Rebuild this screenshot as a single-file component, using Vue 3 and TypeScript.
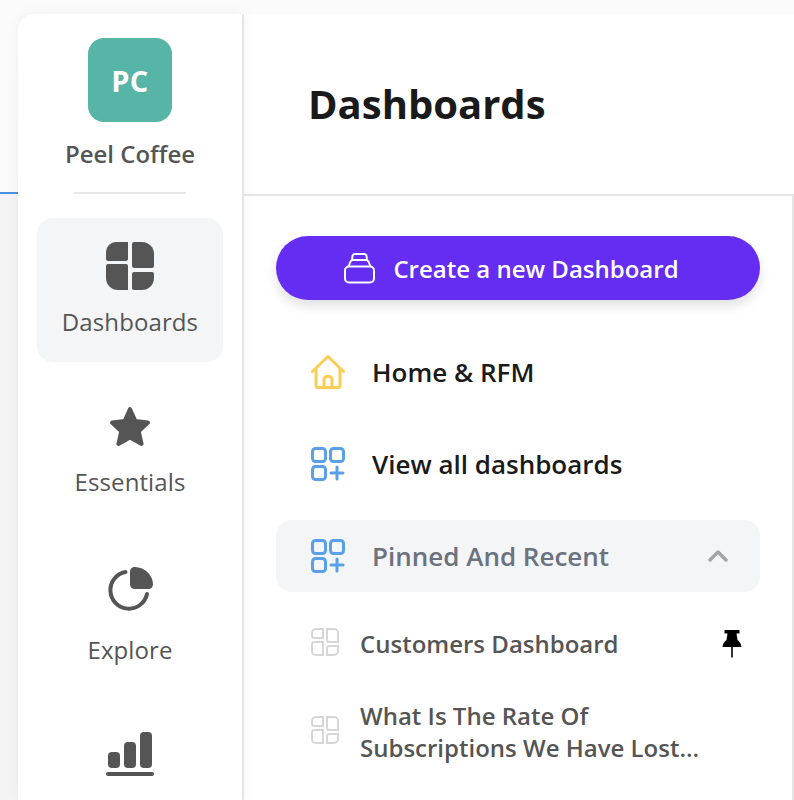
<template>
  <div class="page">
    <aside class="sidebar">
      <div class="brand">
        <div class="logo">PC</div>
        <div class="brand-name">Peel Coffee</div>
      </div>
      <div class="brand-divider"></div>
      <nav class="nav">
        <a class="nav-item active">
          <svg class="nav-icon" viewBox="0 0 48 48" fill="#555">
            <path d="M22 0V17a2 2 0 0 1-2 2H2a2 2 0 0 1-2-2V10A10 10 0 0 1 10 0Z" />
            <path d="M26 2a2 2 0 0 1 2-2h8A12 12 0 0 1 48 12V24a2 2 0 0 1-2 2H28a2 2 0 0 1-2-2Z" />
            <path d="M2 22H20a2 2 0 0 1 2 2V48H12A12 12 0 0 1 0 36V24a2 2 0 0 1 2-2Z" />
            <path d="M28 30H46a2 2 0 0 1 2 2V36A12 12 0 0 1 36 48H28a2 2 0 0 1-2-2V32a2 2 0 0 1 2-2Z" />
          </svg>
          <span class="nav-label">Dashboards</span>
        </a>
        <a class="nav-item essentials">
          <svg class="nav-icon" viewBox="0 0 48 48" fill="#555" stroke="#555" stroke-width="4" stroke-linejoin="round">
            <path d="M24 5 29.400 17.100 42 18.500 32.700 27.300 35.600 39.900 24 33.500 12.400 39.900 15.300 27.300 6 18.500 18.600 17.100Z" />
          </svg>
          <span class="nav-label">Essentials</span>
        </a>
        <a class="nav-item explore">
          <svg class="nav-icon" viewBox="0 0 48 48">
            <path d="M19.500 6A18.500 18.500 0 1 0 41 28" fill="none" stroke="#555" stroke-width="4" stroke-linecap="round" />
            <path d="M24 6C24 2.500 26 1 29 1 39 1 47 10 47 18 47 21 45 23 42 23H29C26 23 24 21 24 18Z" fill="#555" />
          </svg>
          <span class="nav-label">Explore</span>
        </a>
        <a class="nav-item metrics">
          <svg class="nav-icon" viewBox="0 0 48 48" fill="#555">
            <rect x="2" y="24" width="12" height="16" rx="4" />
            <rect x="18" y="14" width="12" height="26" rx="4" />
            <rect x="34" y="4" width="12" height="36" rx="4" />
            <rect x="0" y="44" width="48" height="4" rx="2" />
          </svg>
          <span class="nav-label">Metrics</span>
        </a>
      </nav>
    </aside>

    <main class="main">
      <header class="header">
        <h1>Dashboards</h1>
      </header>
      <section class="content">
        <button class="create-btn">
          <svg class="create-icon" viewBox="0 0 32 32" fill="none" stroke="#fff" stroke-width="2" stroke-linejoin="round">
            <rect x="2" y="14.500" width="29" height="16" rx="4" />
            <path d="M5.500 14.500 7.500 9.500C8 8.500 8.500 8 10 8H23C24.500 8 25 8.500 25.500 9.500L27.500 14.500" />
            <path d="M9 8 9.500 4C9.800 2.500 10.500 2 12 2H21C22.500 2 23.200 2.500 23.500 4L24 8" />
          </svg>
          <span>Create a new Dashboard</span>
        </button>

        <div class="row">
          <svg class="row-icon" viewBox="0 0 34 34" fill="none" stroke="#fbcd55" stroke-width="3" stroke-linecap="round" stroke-linejoin="round">
            <path d="M1.500 16.500 17 1.500 32.500 16.500" />
            <path d="M5 14V30.500A2 2 0 0 0 7 32.500H27A2 2 0 0 0 29 30.500V14" />
            <path d="M13 32V24.500A3 3 0 0 1 16 21.500H18A3 3 0 0 1 21 24.500V32" />
          </svg>
          <span class="row-text">Home &amp; RFM</span>
        </div>

        <div class="row">
          <svg class="row-icon" viewBox="0 0 34 34" fill="none" stroke="#5aa0e8" stroke-width="3" stroke-linecap="round">
            <rect x="1.500" y="1.500" width="13" height="13" rx="3" />
            <rect x="19.500" y="1.500" width="13" height="13" rx="3" />
            <rect x="1.500" y="19.500" width="13" height="13" rx="3" />
            <path d="M26 20V32M20 26H32" />
          </svg>
          <span class="row-text">View all dashboards</span>
        </div>

        <div class="row group">
          <svg class="row-icon" viewBox="0 0 34 34" fill="none" stroke="#5aa0e8" stroke-width="3" stroke-linecap="round">
            <rect x="1.500" y="1.500" width="13" height="13" rx="3" />
            <rect x="19.500" y="1.500" width="13" height="13" rx="3" />
            <rect x="1.500" y="19.500" width="13" height="13" rx="3" />
            <path d="M26 20V32M20 26H32" />
          </svg>
          <span class="row-text">Pinned And Recent</span>
          <svg class="chevron" viewBox="0 0 20 12" fill="none" stroke="#a2a5aa" stroke-width="3.500" stroke-linecap="round" stroke-linejoin="round">
            <path d="M2 10 10 2 18 10" />
          </svg>
        </div>

        <ul class="sub-list">
          <li v-for="item in pinned" :key="item.title" class="sub-row" :class="{ tall: !item.pinned }">
            <svg class="sub-icon" viewBox="0 0 28 28" fill="none" stroke="#d6d6d6" stroke-width="2">
              <path d="M12 1V10H3A2 2 0 0 1 1 8V5A4 4 0 0 1 5 1Z" />
              <path d="M16 1H23A4 4 0 0 1 27 5V14H18A2 2 0 0 1 16 12Z" />
              <path d="M3 14H12V27H5A4 4 0 0 1 1 23V16A2 2 0 0 1 3 14Z" />
              <path d="M18 18H27V23A4 4 0 0 1 23 27H16V20A2 2 0 0 1 18 18Z" />
            </svg>
            <span class="sub-text">{{ item.title }}</span>
            <svg v-if="item.pinned" class="pin" viewBox="0 0 20 28" fill="#000">
              <path d="M2.500 0H17.500V3.500H14.500L15.500 10C17.500 11.500 19 13.500 19.500 17H10.800V27.500H9.200V17H.5C1 13.500 2.500 11.500 4.500 10L5.500 3.500H2.500Z" />
            </svg>
          </li>
        </ul>
      </section>
    </main>
  </div>
</template>

<script setup lang="ts">
interface PinnedItem {
  title: string;
  pinned: boolean;
}

const pinned: PinnedItem[] = [
  { title: 'Customers Dashboard', pinned: true },
  { title: 'What Is The Rate Of Subscriptions We Have Lost...', pinned: false },
];
</script>

<style>
html,
body {
  margin: 0;
  overflow: hidden;
}
</style>

<style scoped>
.page {
  position: relative;
  display: flex;
  box-sizing: border-box;
  height: 800px;
  padding: 14px 0 0 18px;
  overflow: hidden;
  font-family: "Open Sans", "Noto Sans", sans-serif;
  background: linear-gradient(to bottom, #fbfbfb 0, #fafafa 192px, #f4f4f4 194px, #f4f4f4 100%);
}

.page::before {
  content: "";
  position: absolute;
  left: 0;
  top: 192px;
  width: 18px;
  height: 2px;
  background: #4a90e2;
}

.sidebar {
  flex: none;
  width: 224px;
  background: #fff;
  border-right: 2px solid #e5e5e5;
  border-top-left-radius: 16px;
  box-shadow: 0 0 14px rgba(0, 0, 0, 0.05);
  z-index: 1;
}

.brand {
  display: flex;
  flex-direction: column;
  align-items: center;
  padding-top: 24px;
}

.logo {
  display: flex;
  align-items: center;
  justify-content: center;
  width: 84px;
  height: 84px;
  border-radius: 16px;
  background: #56b5a6;
  color: #fff;
  font-size: 29px;
  font-weight: 700;
  letter-spacing: 0.5px;
}

.brand-name {
  margin-top: 16px;
  font-size: 24px;
  line-height: 32px;
  font-weight: 600;
  color: #555;
}

.brand-divider {
  height: 2px;
  margin: 22px 56px 24px;
  background: #e8e8e8;
}

.nav {
  display: flex;
  flex-direction: column;
  gap: 18px;
  padding: 0 19px;
}

.nav-item {
  display: flex;
  flex-direction: column;
  align-items: center;
  flex: none;
  height: 144px;
  box-sizing: border-box;
  padding-top: 24px;
  border-radius: 16px;
}

.nav-item.active {
  background: #f4f5f7;
}

.nav-icon {
  width: 48px;
  height: 48px;
  flex: none;
}

.nav-label {
  margin-top: 16px;
  font-size: 24px;
  line-height: 32px;
  letter-spacing: 0.1px;
  color: #555;
}

.essentials .nav-label {
  margin-top: 14px;
}

.explore .nav-label {
  margin-top: 20px;
}

.main {
  flex: 1;
  display: flex;
  flex-direction: column;
  min-width: 0;
  background: #fff;
}

.header {
  flex: none;
  height: 182px;
  box-sizing: border-box;
  display: flex;
  align-items: center;
  padding-left: 64px;
  border-bottom: 2px solid #e5e5e5;
}

.header h1 {
  margin: 0 0 2px;
  font-size: 40px;
  font-weight: 700;
  color: #1a1a1a;
}

.content {
  flex: 1;
  display: flex;
  flex-direction: column;
  gap: 20px;
  padding: 40px 32px 0;
  border-right: 2px solid #e5e5e5;
}

.create-btn {
  display: flex;
  align-items: center;
  justify-content: center;
  gap: 18px;
  flex: none;
  height: 64px;
  margin-bottom: 16px;
  padding: 0 14px 0 0;
  border: none;
  border-radius: 32px;
  background: #652df2;
  box-shadow: 0 6px 12px rgba(0, 0, 0, 0.12);
  color: #fff;
  font-family: inherit;
  font-size: 24px;
  font-weight: 600;
}

.create-icon {
  width: 32px;
  height: 32px;
}

.row {
  display: flex;
  align-items: center;
  flex: none;
  height: 72px;
  padding: 0 32px 0 35px;
  border-radius: 16px;
}

.row-icon {
  flex: none;
  width: 34px;
  height: 34px;
  margin-right: 27px;
}

.row-text {
  flex: 1;
  font-size: 26px;
  font-weight: 600;
  color: #1a1a1a;
}

.group {
  background: #f4f5f7;
}

.group .row-text {
  color: #6b7280;
}

.chevron {
  width: 20px;
  height: 12px;
}

.sub-list {
  margin: 0;
  padding: 0;
  list-style: none;
}

.sub-row {
  display: flex;
  align-items: center;
  height: 64px;
  padding: 0 18px 0 35px;
}

.sub-row.tall {
  height: 80px;
  margin-top: 16px;
}

.sub-icon {
  flex: none;
  width: 28px;
  height: 28px;
  margin-right: 21px;
  margin-bottom: 4px;
}

.sub-text {
  max-width: 345px;
  flex: 1;
  font-size: 24px;
  line-height: 32px;
  font-weight: 600;
  color: #555;
}

.pin {
  flex: none;
  width: 20px;
  height: 28px;
  margin-left: auto;
}
</style>
